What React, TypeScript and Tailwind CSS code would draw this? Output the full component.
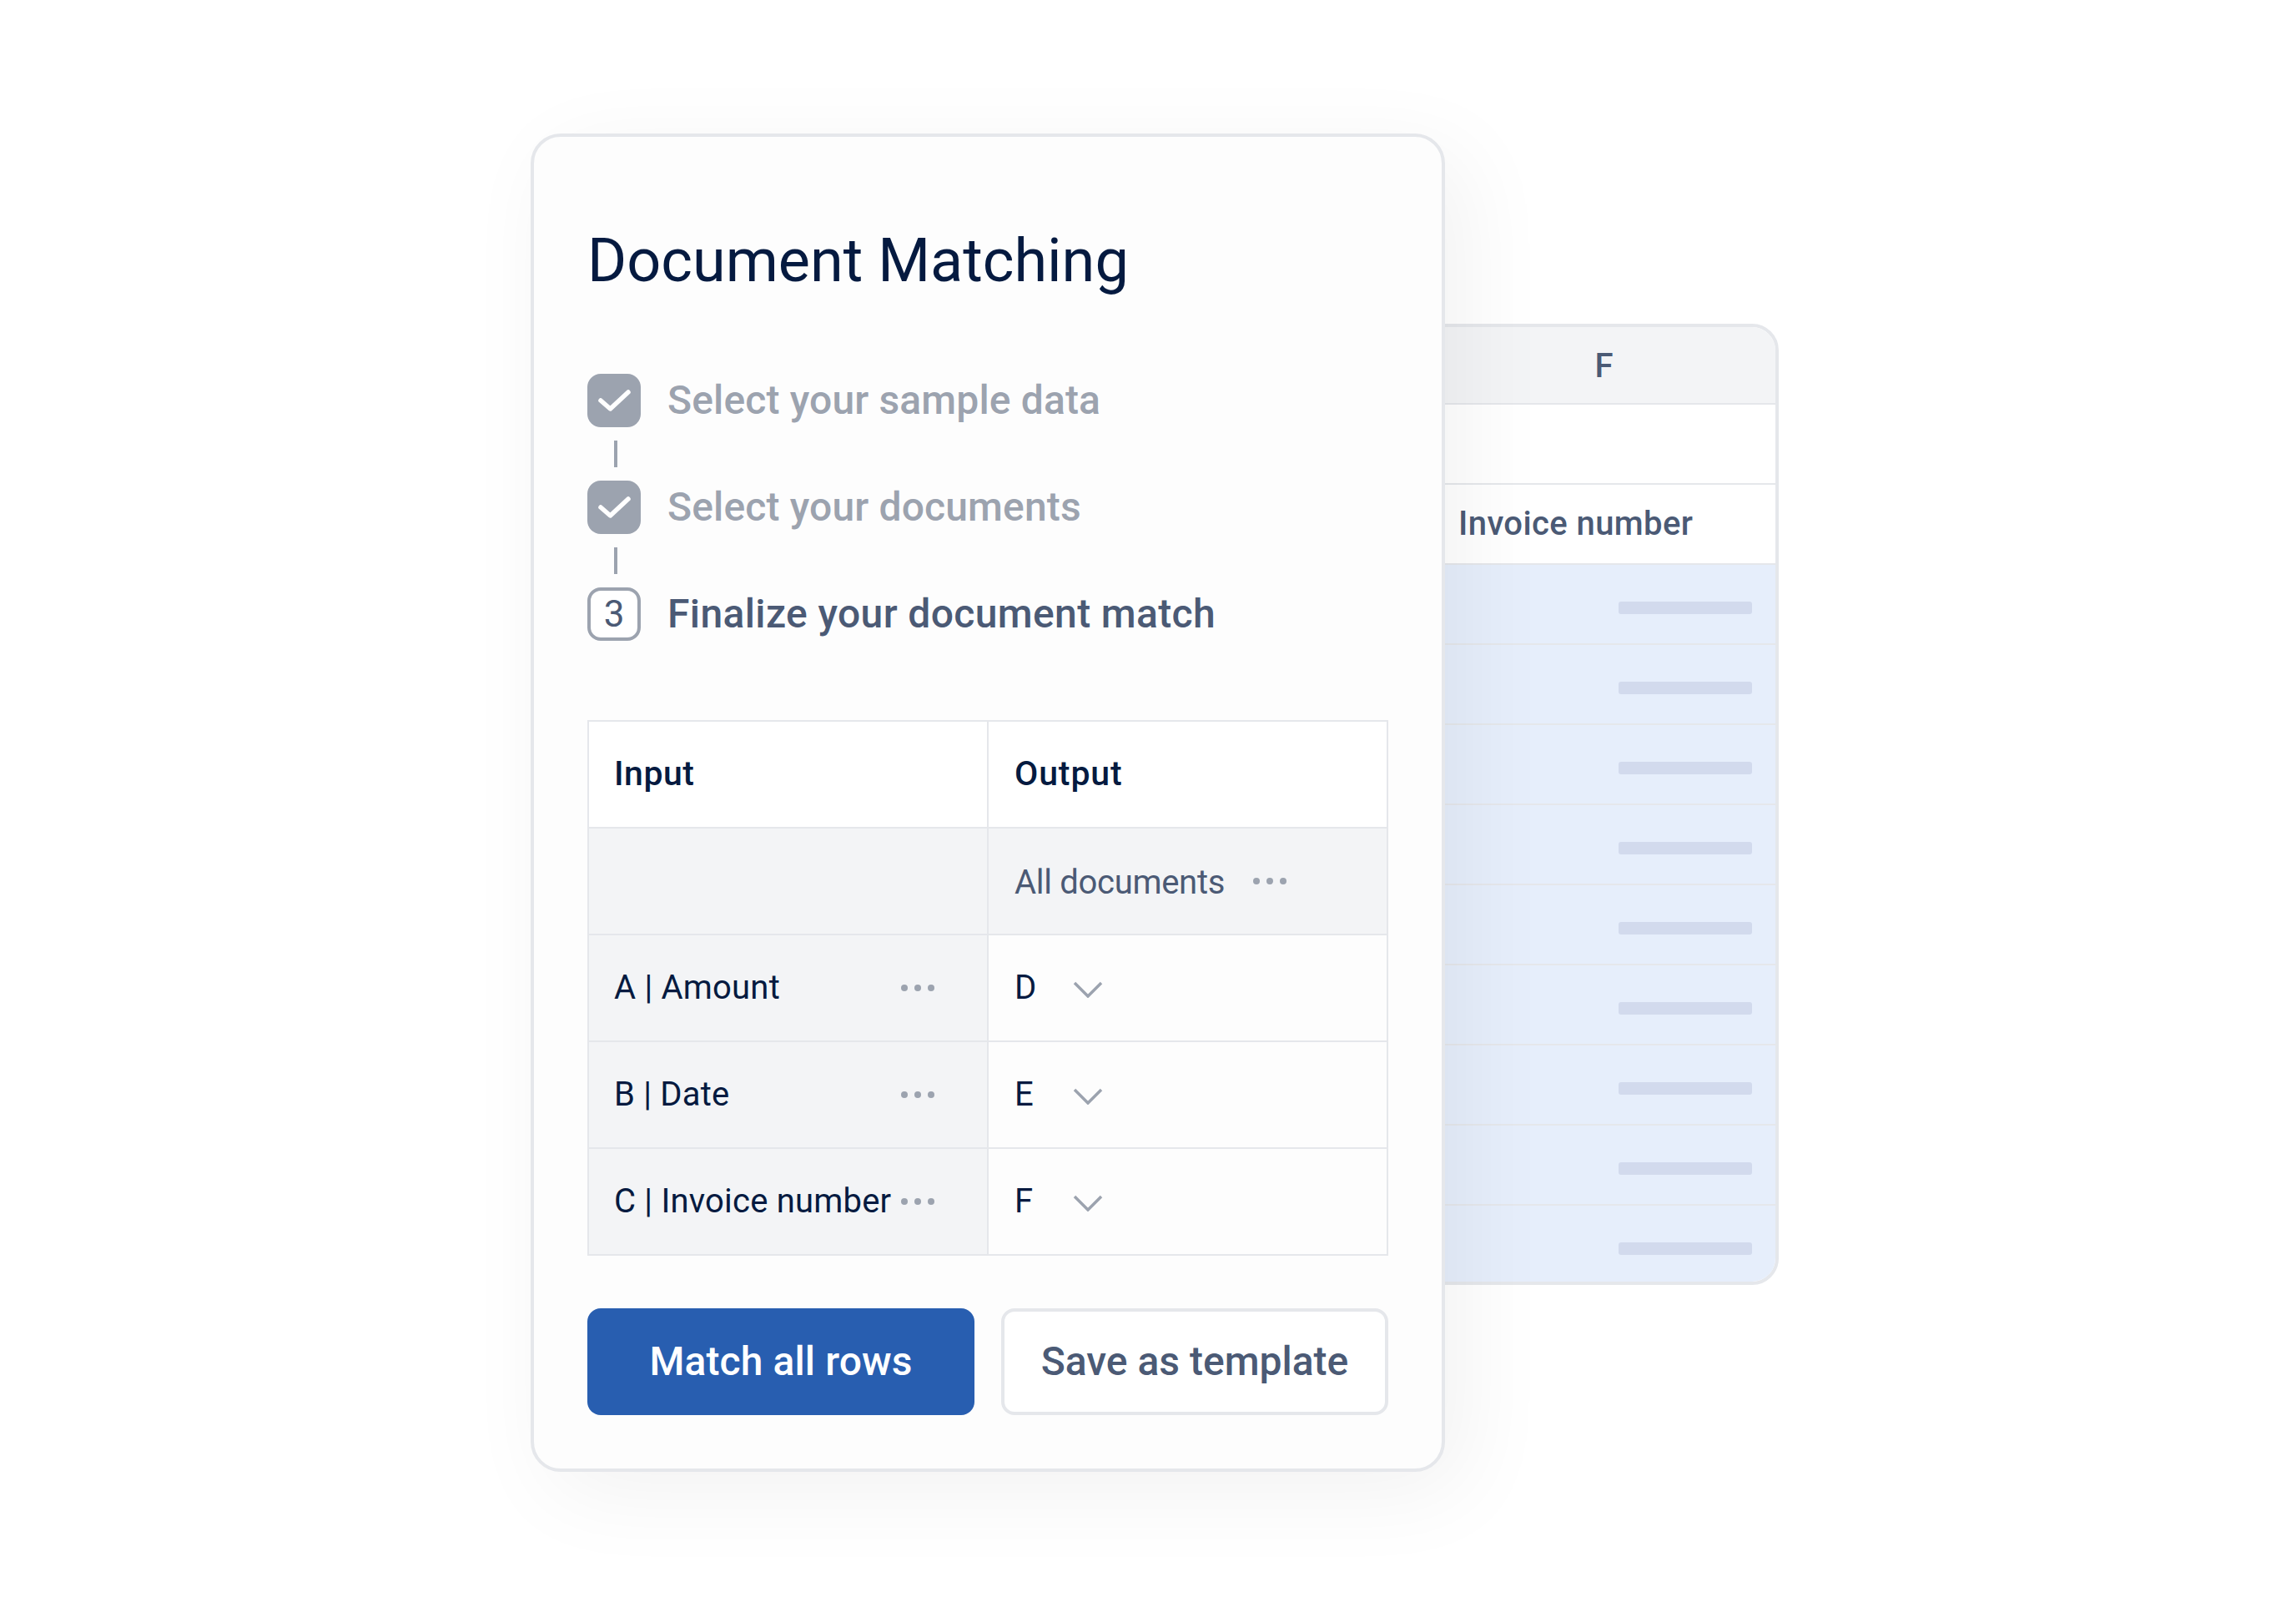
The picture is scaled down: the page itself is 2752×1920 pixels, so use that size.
const rows = [
  { input: "A | Amount", output: "D" },
  { input: "B | Date", output: "E" },
  { input: "C | Invoice number", output: "F" },
];

const stripes = [0, 1, 2, 3, 4, 5, 6, 7, 8];

function Dots() {
  return (
    <div className="flex gap-2 shrink-0">
      <span className="w-2 h-2 rounded-full bg-[#9ca3af]" />
      <span className="w-2 h-2 rounded-full bg-[#9ca3af]" />
      <span className="w-2 h-2 rounded-full bg-[#9ca3af]" />
    </div>
  );
}

function Chevron() {
  return (
    <svg width="36" height="20" viewBox="0 0 36 20" fill="none" className="shrink-0 mt-1">
      <path d="M2 2L18 18L34 2" stroke="#9ca3af" strokeWidth="3.5" />
    </svg>
  );
}

function DoneStep({ label }: { label: string }) {
  return (
    <div className="flex items-center gap-8 h-16">
      <div className="w-16 h-16 rounded-2xl bg-[#9ca3af] flex items-center justify-center">
        <svg width="64" height="64" viewBox="0 0 64 64" fill="none">
          <path
            d="M16 32L27.5 42L49 22"
            stroke="white"
            strokeWidth="5.5"
            strokeLinecap="round"
            strokeLinejoin="round"
          />
        </svg>
      </div>
      <span className="text-[48px] tracking-[0.15px] text-[#9ca3af] font-medium">{label}</span>
    </div>
  );
}

function Connector() {
  return <div className="w-1 h-8 my-4 ml-8 bg-[#9ca3af]" />;
}

export default function App() {
  return (
    <div className="min-h-screen bg-white font-['Roboto',sans-serif] flex items-start pl-[636px] pt-[160px]">
      {/* Main card */}
      <div className="relative z-10 w-[1096px] h-[1604px] shrink-0 rounded-[36px] border-4 border-[#e5e7eb] bg-[#fdfdfd] shadow-[24px_24px_110px_rgba(0,0,0,0.055)] px-16 flex flex-col">
        <h1 className="mt-[101px] text-[72px] leading-[96px] text-[#051a40] font-normal">Document Matching</h1>

        <div className="mt-[87px]">
          <DoneStep label="Select your sample data" />
          <Connector />
          <DoneStep label="Select your documents" />
          <Connector />
          <div className="flex items-center gap-8 h-16">
            <div className="w-16 h-16 rounded-2xl border-4 border-[#9ca3af] bg-white flex items-center justify-center text-[44px] text-[#4b5a75]">
              3
            </div>
            <span className="text-[48px] tracking-[0.37px] text-[#4b5a75] font-medium">Finalize your document match</span>
          </div>
        </div>

        {/* Mapping table */}
        <div className="mt-[95px] w-[960px] border-x-2 border-b-2 border-[#e5e7eb] text-[40px] text-[#051a40]">
          <div className="grid grid-cols-[477px_1fr] h-[130px] border-y-2 border-[#e5e7eb] bg-white font-medium text-[41px] tracking-[0.5px]">
            <div className="flex items-center pl-[30px]">Input</div>
            <div className="flex items-center pl-[31px] border-l-2 border-[#e5e7eb] tracking-[0.9px]">Output</div>
          </div>
          <div className="grid grid-cols-[477px_1fr] h-[128px] border-b-2 border-[#e5e7eb] bg-[#f3f4f6]">
            <div />
            <div className="flex items-center pl-[31px] border-l-2 border-[#e5e7eb] text-[#4b5a75] tracking-[-0.3px]">
              <span className="pt-[3px]">All documents</span>
              <span className="ml-[34px]">
                <Dots />
              </span>
            </div>
          </div>
          {rows.map((row) => (
            <div key={row.output} className="grid grid-cols-[477px_1fr] h-[128px] border-b-2 border-[#e5e7eb] last:border-b-0 last:h-[126px]">
              <div className="flex items-center justify-between pl-[30px] pr-[63px] bg-[#f3f4f6]">
                <span className="whitespace-nowrap tracking-[0.2px]">{row.input}</span>
                <Dots />
              </div>
              <div className="flex items-center pl-[31px] border-l-2 border-[#e5e7eb] bg-[#fdfdfd]">
                <span className="w-[70px]">{row.output}</span>
                <Chevron />
              </div>
            </div>
          ))}
        </div>

        <div className="mt-[63px] flex gap-8">
          <button className="w-[464px] h-[128px] rounded-2xl bg-[#285eb0] text-white text-[48px] font-medium tracking-[0.1px]">
            Match all rows
          </button>
          <button className="w-[464px] h-[128px] rounded-2xl border-4 border-[#e5e7eb] bg-white text-[#4b5a75] text-[48px] font-medium">
            Save as template
          </button>
        </div>
      </div>

      {/* Spreadsheet column behind the card */}
      <div className="ml-[-16px] mt-[228px] w-[416px] h-[1152px] shrink-0 rounded-r-[32px] border-4 border-[#e5e7eb] bg-white overflow-hidden">
        <div className="h-[93px] pt-[3px] pr-[3px] flex items-center justify-center bg-[#f3f4f6] border-b-2 border-[#e5e7eb] text-[40px] font-medium text-[#4b5a75]">
          F
        </div>
        <div className="h-[96px] border-b-2 border-[#e5e7eb]" />
        <div className="h-[96px] border-b-2 border-[#e5e7eb] flex items-center pl-[28px] text-[40px] tracking-[0.4px] font-medium text-[#4b5a75]">
          Invoice number
        </div>
        {stripes.map((n) => (
          <div key={n} className="h-[96px] border-b-2 border-[#e5e7eb] bg-[#e6eefb] flex justify-end pt-[44px] pr-[28px] last:border-b-0">
            <div className="w-[160px] h-[15px] rounded-[3px] bg-[#d2daed]" />
          </div>
        ))}
      </div>
    </div>
  );
}
